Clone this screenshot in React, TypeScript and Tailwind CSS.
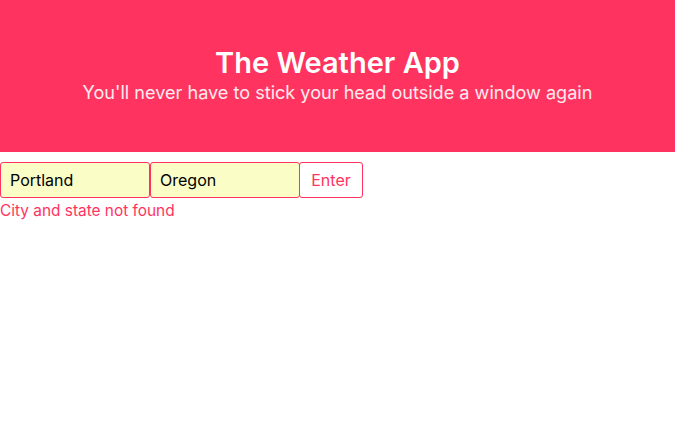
import React, { useState } from 'react';

export default function App() {
  const [city, setCity] = useState("Portland");
  const [state, setState] = useState("Oregon");

  return (
    <div className="min-h-screen bg-white font-['Inter',sans-serif]">
      {/* HEADER */}
      <header className="h-[152px] bg-[#ff335f] text-white flex flex-col items-center justify-center">
        <h1 className="text-[29px] font-semibold leading-[36px] mt-[-4px]">The Weather App</h1>
        <p className="text-[18.1px] leading-[22px] text-white/90">You'll never have to stick your head outside a window again</p>
      </header>

      {/* SEARCH FORM */}
      <form className="mt-[10px]" onSubmit={(e) => e.preventDefault()}>
        <div className="flex h-[36px]">
          <input
            value={city}
            onChange={(e) => setCity(e.target.value)}
            className="w-[150px] h-full bg-[#fafdc6] border border-[#ff335f] rounded-[3px] px-[9px] text-[16px] text-black outline-none"
          />
          <input
            value={state}
            onChange={(e) => setState(e.target.value)}
            className="w-[150px] h-full bg-[#fafdc6] border border-[#ff335f] rounded-[3px] px-[9px] text-[16px] text-black outline-none"
          />
          <button className="w-[64px] h-full bg-white border border-[#ff335f] rounded-[3px] text-[16px] text-[#ff335f] ml-[-1px]">
            Enter
          </button>
        </div>
        <p className="text-[15.4px] leading-[24px] text-[#ff335f] mt-[1px]">City and state not found</p>
      </form>
    </div>
  );
}
